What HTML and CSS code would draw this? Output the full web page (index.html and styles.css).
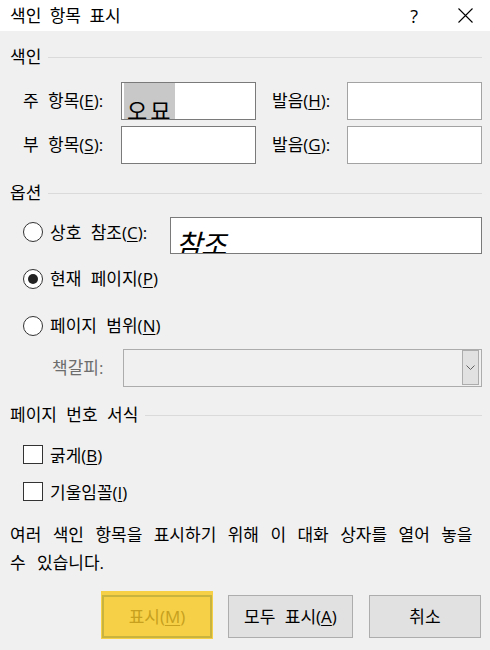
FILE: index.html
```html
<!DOCTYPE html>
<html lang="ko">
<head>
<meta charset="utf-8">
<title>색인 항목 표시</title>
<link rel="stylesheet" href="styles.css">
</head>
<body>
<div class="titlebar">
  <span class="title">색인 항목 표시</span>
  <span class="help">?</span>
  <svg class="close" width="15" height="15" viewBox="0 0 15 15"><path d="M0.5 0.5L14.5 14.5M14.5 0.5L0.5 14.5" stroke="#000" stroke-width="1.1" fill="none"/></svg>
</div>

<div class="group-head head-index"><span>색인</span><i class="rule"></i></div>

<div class="field-row row-main">
  <span class="lbl lbl-main">주 항목(<u>E</u>):</span>
  <div class="box dark"><span class="sel">오묘</span></div>
  <span class="lbl lbl-pron">발음(<u>H</u>):</span>
  <div class="box light"></div>
</div>
<div class="field-row row-sub">
  <span class="lbl lbl-main">부 항목(<u>S</u>):</span>
  <div class="box dark"></div>
  <span class="lbl lbl-pron">발음(<u>G</u>):</span>
  <div class="box light"></div>
</div>

<div class="group-head head-options"><span>옵션</span><i class="rule"></i></div>

<div class="radio-row rr1">
  <span class="radio"></span>
  <span class="rlabel rlabel-cross">상호 참조(<u>C</u>):</span>
  <div class="box dark crossbox"><span class="cross">참조</span></div>
</div>
<div class="radio-row rr2">
  <span class="radio on"></span>
  <span class="rlabel">현재 페이지(<u>P</u>)</span>
</div>
<div class="radio-row rr3">
  <span class="radio"></span>
  <span class="rlabel">페이지 범위(<u>N</u>)</span>
</div>
<div class="select-row">
  <span class="lbl-bm">책갈피:</span>
  <div class="select"><span class="dd"><svg width="9" height="5" viewBox="0 0 9 5"><path d="M0.5 0.5L4.5 4.5L8.5 0.5" stroke="#606060" stroke-width="1" fill="none"/></svg></span></div>
</div>

<div class="group-head head-format"><span>페이지 번호 서식</span><i class="rule"></i></div>

<div class="check-row cr1">
  <span class="check"></span>
  <span class="clabel">굵게(<u>B</u>)</span>
</div>
<div class="check-row cr2">
  <span class="check"></span>
  <span class="clabel">기울임꼴(<u>I</u>)</span>
</div>

<p class="desc">여러 색인 항목을 표시하기 위해 이 대화 상자를 열어 놓을<br>수 있습니다.</p>

<div class="buttons">
  <button class="btn btn-mark">표시(<u>M</u>)</button>
  <button class="btn btn-all">모두 표시(<u>A</u>)</button>
  <button class="btn btn-cancel">취소</button>
</div>
</body>
</html>
```

FILE: styles.css
```css
* { box-sizing: border-box; }
html, body { margin: 0; padding: 0; }
body {
  width: 490px;
  height: 650px;
  overflow: hidden;
  background: #f0f0f0;
  color: #000;
  font-family: "Open Sans", "Noto Sans CJK KR", sans-serif;
  font-size: 17px;
  line-height: 20px;
  word-spacing: 5px;
}
u { text-decoration: underline; text-underline-offset: 2px; text-decoration-thickness: 1px; }

.titlebar {
  height: 31px;
  background: #fff;
  display: flex;
  align-items: center;
  padding-left: 10px;
}
.title { flex: 1; font-size: 17px; line-height: 20px; word-spacing: 4px; }
.help { font-size: 18px; margin-right: 40px; line-height: 20px; }
.close { margin-right: 17px; display: block; }

.group-head {
  display: flex;
  align-items: center;
  gap: 7px;
  height: 20px;
  padding: 0 8px 0 10px;
}
.rule { flex: 1; height: 1px; background: #dadada; }
.head-index { margin-top: 16px; }
.head-options { margin-top: 19px; }
.head-format { margin-top: 18px; }

.field-row {
  display: flex;
  align-items: center;
  height: 38px;
  padding-left: 23px;
}
.row-main { margin-top: 15px; }
.row-sub { margin-top: 6px; }
.lbl-main { width: 98px; }
.lbl-pron { width: 75px; margin-left: 16px; }

.box {
  width: 135px;
  height: 38px;
  background: #fff;
  border: 1px solid #7a7a7a;
}
.box.light { border-color: #a3a3a3; }

.sel {
  display: inline-flex;
  align-items: flex-end;
  height: 36px;
  margin-left: 2px;
  padding: 0 2px 0 3px;
  background: #c8c8c8;
  font-family: "Noto Sans CJK KR", sans-serif;
  font-size: 22px;
  line-height: 20px;
  letter-spacing: 3px;
  font-weight: 400;
}

.radio-row {
  display: flex;
  align-items: flex-start;
  padding-left: 23px;
}
.rr1 { margin-top: 14px; height: 37px; }
.rr2 { margin-top: 15px; }
.rr3 { margin-top: 27px; }
.radio {
  flex: none;
  width: 20px;
  height: 20px;
  border-radius: 50%;
  border: 1px solid #333;
  background: #fff;
  display: flex;
  align-items: center;
  justify-content: center;
}
.rr1 .radio { margin-top: 5px; }
.radio.on::after {
  content: "";
  width: 10px;
  height: 10px;
  border-radius: 50%;
  background: #222;
}
.rlabel { margin-left: 7px; line-height: 20px; }
.rr1 .rlabel { margin-top: 6px; }
.rlabel-cross { width: 120px; }
.crossbox {
  width: 312px;
  height: 37px;
  overflow: hidden;
  padding: 8px 0 0 5px;
}
.cross {
  display: block;
  font-family: "Noto Sans CJK KR", sans-serif;
  font-style: italic;
  font-size: 28px;
  line-height: 34px;
  font-weight: 400;
  letter-spacing: -1px;
}

.select-row {
  display: flex;
  align-items: center;
  margin-top: 13px;
  height: 38px;
}
.lbl-bm { margin-left: 52px; width: 71px; color: #6d6d6d; }
.select {
  width: 359px;
  height: 38px;
  border: 1px solid #acacac;
  background: #f0f0f0;
  display: flex;
  justify-content: flex-end;
  padding: 0 2px 0 0;
}
.dd {
  width: 17px;
  height: 35px;
  margin-top: 0;
  background: #e1e1e1;
  border: 1px solid #acacac;
  display: flex;
  align-items: center;
  justify-content: center;
}

.check-row {
  display: flex;
  align-items: center;
  padding-left: 23px;
  height: 19px;
}
.cr1 { margin-top: 20px; }
.cr2 { margin-top: 18px; }
.check {
  flex: none;
  width: 20px;
  height: 19px;
  border: 1px solid #333;
  background: #fff;
}
.clabel { margin-left: 7px; margin-top: 3px; }

.desc {
  margin: 20px 0 0 0;
  padding: 0 10px;
  line-height: 28px;
  white-space: nowrap;
  word-spacing: 7px;
  letter-spacing: 0;
}

.buttons {
  display: flex;
  justify-content: flex-end;
  gap: 16px;
  padding-right: 9px;
  margin-top: 18px;
}
.btn {
  height: 43px;
  background: #e1e1e1;
  border: 1px solid #adadad;
  font: inherit;
  color: #000;
  padding: 0;
  word-spacing: 5px;
}
.btn-mark {
  width: 110px;
  background: #f6d046;
  border: 2px solid #c9b440;
  color: #c6a01e;
  box-shadow: 0 0 0 1px #f6d046, 0 -3px 0 1px #f6d046;
}
.btn-all { width: 125px; }
.btn-cancel { width: 112px; }
```
